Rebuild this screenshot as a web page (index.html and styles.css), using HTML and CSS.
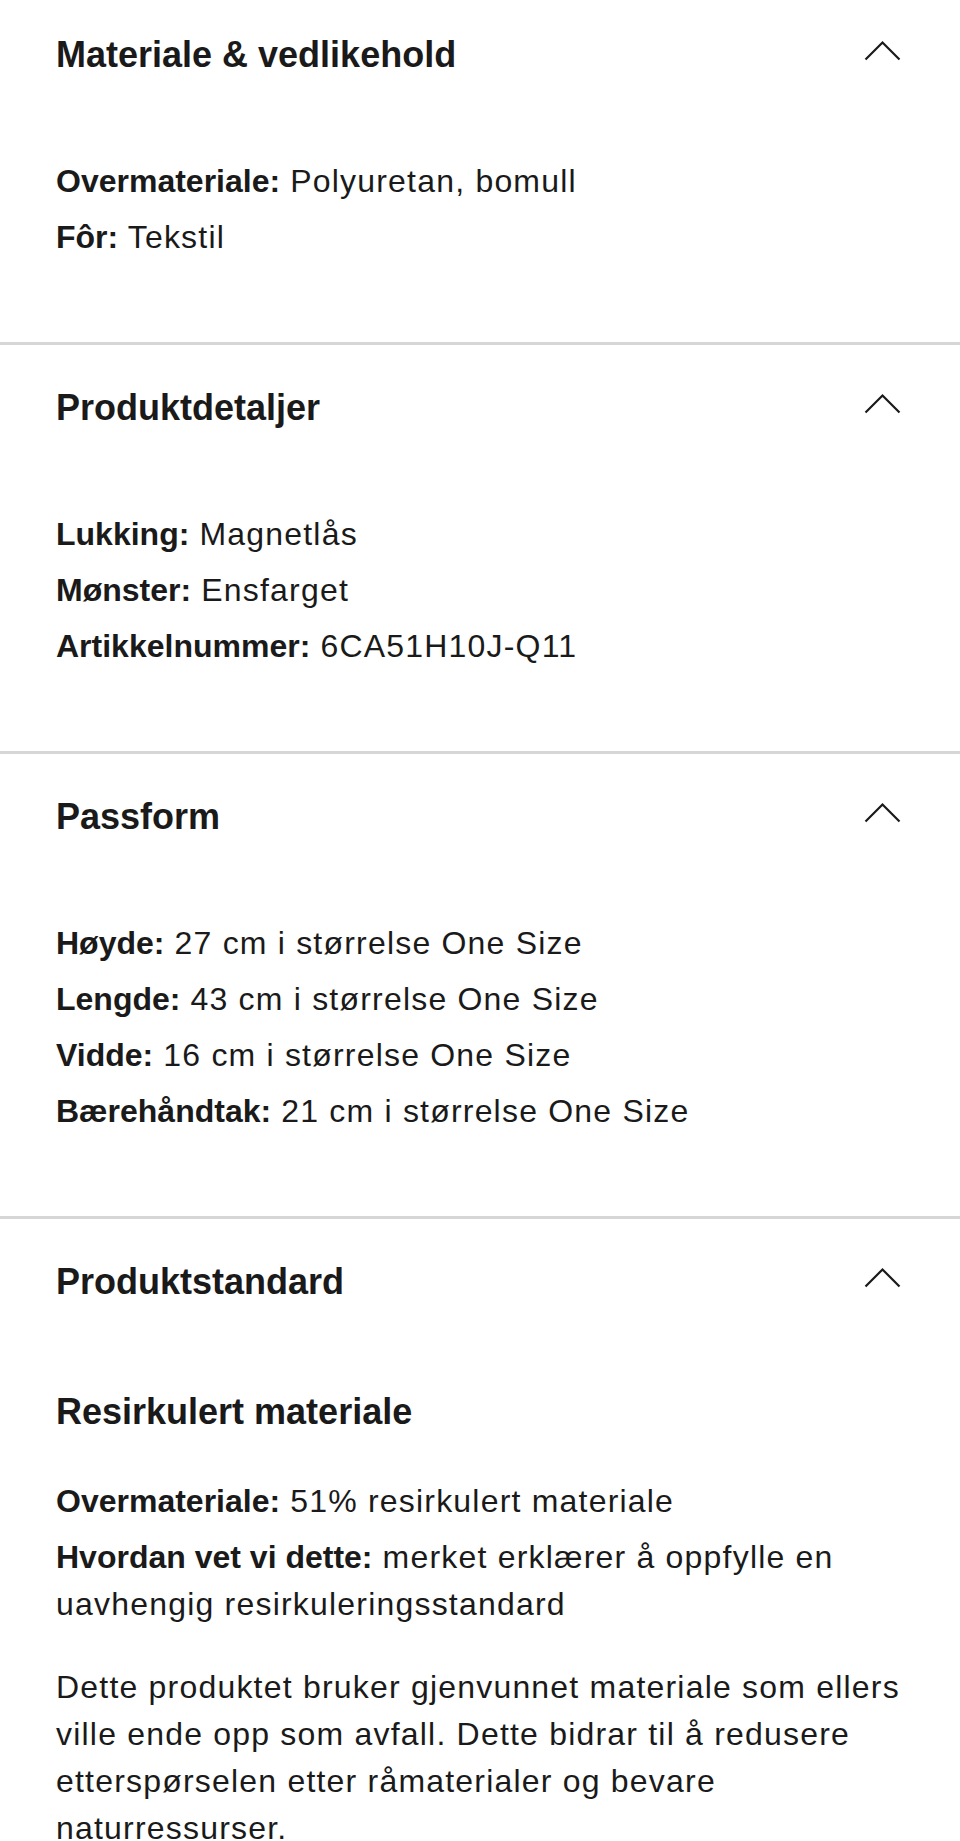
FILE: index.html
```html
<!DOCTYPE html>
<html lang="no">
<head>
<meta charset="utf-8">
<title>Produktinformasjon</title>
<link rel="stylesheet" href="styles.css">
</head>
<body>
<main class="accordion">
  <section class="section">
    <div class="section-header">
      <h2 class="section-title">Materiale &amp; vedlikehold</h2>
      <svg class="chevron" width="40" height="40" viewBox="0 0 40 40" aria-hidden="true"><path d="M1.5 24.5 L18.5 7.5 L35.5 24.5" fill="none" stroke="#1a1a1a" stroke-width="2.2"/></svg>
    </div>
    <div class="section-body">
      <ul class="specs">
        <li><strong>Overmateriale:</strong> Polyuretan, bomull</li>
        <li><strong>Fôr:</strong> Tekstil</li>
      </ul>
    </div>
  </section>

  <section class="section">
    <div class="section-header">
      <h2 class="section-title">Produktdetaljer</h2>
      <svg class="chevron" width="40" height="40" viewBox="0 0 40 40" aria-hidden="true"><path d="M1.5 24.5 L18.5 7.5 L35.5 24.5" fill="none" stroke="#1a1a1a" stroke-width="2.2"/></svg>
    </div>
    <div class="section-body">
      <ul class="specs">
        <li><strong>Lukking:</strong> Magnetlås</li>
        <li><strong>Mønster:</strong> Ensfarget</li>
        <li><strong>Artikkelnummer:</strong> 6CA51H10J-Q11</li>
      </ul>
    </div>
  </section>

  <section class="section">
    <div class="section-header">
      <h2 class="section-title">Passform</h2>
      <svg class="chevron" width="40" height="40" viewBox="0 0 40 40" aria-hidden="true"><path d="M1.5 24.5 L18.5 7.5 L35.5 24.5" fill="none" stroke="#1a1a1a" stroke-width="2.2"/></svg>
    </div>
    <div class="section-body">
      <ul class="specs">
        <li><strong>Høyde:</strong> 27 cm i størrelse One Size</li>
        <li><strong>Lengde:</strong> 43 cm i størrelse One Size</li>
        <li><strong>Vidde:</strong> 16 cm i størrelse One Size</li>
        <li><strong>Bærehåndtak:</strong> 21 cm i størrelse One Size</li>
      </ul>
    </div>
  </section>

  <section class="section">
    <div class="section-header">
      <h2 class="section-title">Produktstandard</h2>
      <svg class="chevron" width="40" height="40" viewBox="0 0 40 40" aria-hidden="true"><path d="M1.5 24.5 L18.5 7.5 L35.5 24.5" fill="none" stroke="#1a1a1a" stroke-width="2.2"/></svg>
    </div>
    <div class="section-body standard">
      <h3 class="sub-title">Resirkulert materiale</h3>
      <ul class="specs">
        <li><strong>Overmateriale:</strong> 51% resirkulert materiale</li>
        <li><strong>Hvordan vet vi dette:</strong> merket erklærer å oppfylle en uavhengig resirkuleringsstandard</li>
      </ul>
      <p class="note">Dette produktet bruker gjenvunnet materiale som ellers ville ende opp som avfall. Dette bidrar til å redusere etterspørselen etter råmaterialer og bevare naturressurser.</p>
    </div>
  </section>
</main>
</body>
</html>
```

FILE: styles.css
```css
html, body {
  margin: 0;
  padding: 0;
  background: #ffffff;
}

body {
  font-family: "Liberation Sans", Arial, sans-serif;
  color: #1a1a1a;
}

.accordion {
  display: flex;
  flex-direction: column;
}

.section {
  border-top: 3px solid #d6d6d6;
  padding: 41px 56px 81px;
}

.section:first-child {
  border-top: 0;
  padding-top: 33px;
}

.section-header {
  display: flex;
  justify-content: space-between;
  align-items: center;
  height: 44px;
}

.section-title {
  margin: 0;
  font-size: 36px;
  line-height: 44px;
  font-weight: 700;
}

.chevron {
  display: block;
  flex: none;
}

.section-body {
  margin-top: 81px;
}

.section-body.standard {
  margin-top: 86px;
}

.sub-title {
  margin: 0 0 44px;
  font-size: 36px;
  line-height: 44px;
  font-weight: 700;
}

.specs {
  list-style: none;
  margin: 0;
  padding: 0;
  display: flex;
  flex-direction: column;
  gap: 9px;
}

.specs li,
.note {
  font-size: 32px;
  line-height: 47px;
  letter-spacing: 1.2px;
}

.specs strong {
  font-weight: 700;
  letter-spacing: 0;
}

.note {
  margin: 36px 0 0;
}
```
